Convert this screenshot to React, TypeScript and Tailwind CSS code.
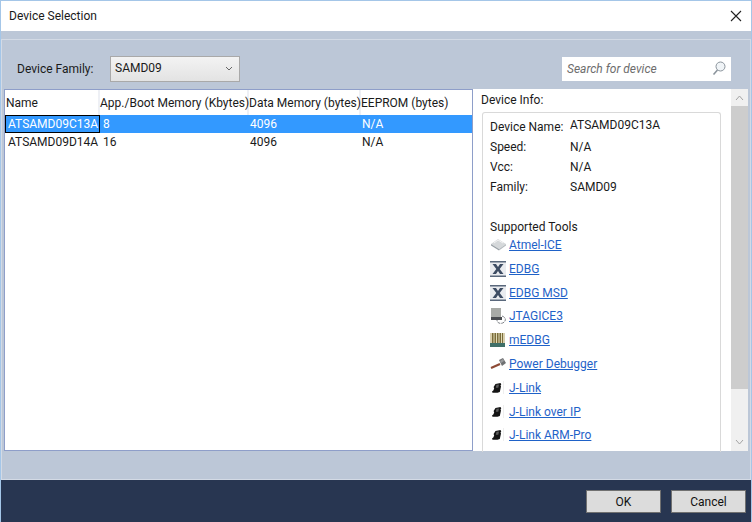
function Hdr({ w, pl, children }: { w: string; pl: string; children: string }) {
  return (
    <div className={`${w} ${pl} h-[25px] shrink-0 flex items-center border-r-2 border-[#eef0f5] whitespace-nowrap`}>
      {children}
    </div>
  );
}

function Row({ sel, name, app }: { sel?: boolean; name: string; app: string }) {
  return (
    <div className={`flex h-[18px] items-center ${sel ? "bg-[#3399ff] text-white" : "text-[#1a1a1a]"}`}>
      <div className={`w-[95px] h-full shrink-0 flex items-center whitespace-nowrap ${sel ? "border border-black pl-[2px]" : "pl-[3px]"}`}>{name}</div>
      <div className="w-[147px] shrink-0 pl-[3px]">{app}</div>
      <div className="w-[112px] shrink-0 pl-[3px]">4096</div>
      <div className="flex-1 pl-[3px]">N/A</div>
    </div>
  );
}

function Info({ k, v, h }: { k: string; v: string; h: string }) {
  return (
    <div className={`flex ${h}`}>
      <div className="w-[80px] shrink-0">{k}</div>
      <div>{v}</div>
    </div>
  );
}

function ChipIcon() {
  return (
    <svg width="16" height="16" viewBox="0 0 16 16">
      <path d="M5.500 4l5-1 .8 1.500-.8.8.5 1.200-1.200 5.500-2.300.8H2.500l-.5-1.300 1.300-.9.900-2.200-.6-1.400z" fill="#141414" />
      <path d="M6.500 4.800l2.500-.4-.7 3.400H5.800z" fill="#5c5c5c" />
      <path d="M13.500 1v13" stroke="#eeeeee" />
    </svg>
  );
}

function XIcon() {
  return (
    <svg width="16" height="16" viewBox="0 0 16 16">
      <rect x="0" y="0" width="16" height="16" fill="#e9ebef" />
      <rect x="0" y="0" width="16" height="1.500" fill="#5a687c" />
      <rect x="0" y="14.500" width="16" height="1.500" fill="#5a687c" />
      <path d="M2.500 3h3.500l2 3 2-3h3.500l-3.800 5 3.800 5H10l-2-3-2 3H2.500l3.800-5z" fill="#3d4c63" />
    </svg>
  );
}

function IceIcon() {
  return (
    <svg width="17" height="16" viewBox="0 0 17 16">
      <path d="M1 7l7-5 8 5-7 5z" fill="#d5d8da" />
      <path d="M1 7l8 5v1.500L1 8.500z" fill="#9aa1a6" />
      <path d="M9 12l7-5v1.500l-7 5z" fill="#b5babe" />
      <path d="M4 6l4-3 5 3" stroke="#f4f4f4" fill="none" />
    </svg>
  );
}

function JtagIcon() {
  return (
    <svg width="17" height="18" viewBox="0 0 17 18">
      <rect x="1" y="1" width="10" height="9" fill="#a8aaa6" />
      <rect x="1" y="10" width="11" height="3" fill="#4a4c50" />
      <path d="M12 9c3 1 4 3 3 5s-4 3-6 2-2-2-2-3" fill="none" stroke="#7d8187" strokeDasharray="3 1" />
    </svg>
  );
}

function MedbgIcon() {
  return (
    <svg width="15" height="16" viewBox="0 0 15 16">
      <rect x="0" y="1" width="15" height="14" fill="#d8cfae" />
      <rect x="2" y="1" width="11" height="10" fill="#7b6c3a" />
      <path d="M4 1v10M6.500 1v10M9 1v10M11.500 1v10" stroke="#e0dcb8" />
      <rect x="0" y="11" width="15" height="4" fill="#3f6f68" />
    </svg>
  );
}

function HammerIcon() {
  return (
    <svg width="17" height="16" viewBox="0 0 17 16">
      <path d="M1 12l9-4" stroke="#8d4a35" strokeWidth="2.200" />
      <path d="M9 4l4-2 3 5-4 3z" fill="#6f7173" />
      <path d="M10 5l3-2 1 2-3 2z" fill="#9a9c9e" />
    </svg>
  );
}

function Tool({ icon, label, h }: { icon: React.ReactNode; label: string; h: string }) {
  return (
    <div className={`flex items-center ${h}`}>
      <div className="w-[17px] h-[18px] shrink-0 flex items-center justify-start">{icon}</div>
      <a className="ml-[2px] [font-family:'Liberation_Sans',sans-serif] text-[12px] text-[#1f62c8] underline" href="#">
        {label}
      </a>
    </div>
  );
}

export default function App() {
  return (
    <div className="w-[752px] h-[522px] flex flex-col overflow-hidden bg-[#bcc7d7] border-x border-t border-[#a4c6e8] text-[12px] leading-[16px] text-[#1a1a1a] [font-family:Roboto,sans-serif]">
      <div className="h-[30px] shrink-0 bg-white flex items-center justify-between pl-[8px] pr-[9px]">
        <span>Device Selection</span>
        <svg width="12" height="12" viewBox="0 0 12 12">
          <path d="M1 1l10 10M11 1L1 11" stroke="#222" strokeWidth="1.100" />
        </svg>
      </div>
      <div className="flex-1 min-h-0 pt-[8px] flex flex-col">
        <div className="flex-1 min-h-0 border border-[#d3dae5] flex flex-col px-[2px] pb-[28px]">
          <div className="h-[49px] shrink-0 flex pl-[13px] pr-[17px] pt-[16px] justify-between">
            <div className="flex">
              <span className="mt-[5px] w-[93px]">Device Family:</span>
              <div className="w-[130px] h-[26px] border border-[#a9a9a9] bg-gradient-to-b from-[#f3f3f3] to-[#e3e3e3] flex items-center justify-between pl-[4px] pr-[6px] pb-[2px]">
                <span>SAMD09</span>
                <svg width="8" height="5" viewBox="0 0 8 5" className="mt-[1px]">
                  <path d="M1 1l3 3 3-3" fill="none" stroke="#666" />
                </svg>
              </div>
            </div>
            <div className="w-[169px] h-[24px] mt-[1px] bg-white flex items-center justify-between pl-[5px] pr-[5px] pb-[1px] italic text-[#6d6d6d]">
              <span>Search for device</span>
              <svg width="14" height="15" viewBox="0 0 14 15">
                <circle cx="8.500" cy="5.500" r="4.500" fill="#f0f4f7" stroke="#8b949c" />
                <path d="M5.500 9L1.500 13.500" stroke="#8b949c" strokeWidth="1.600" />
              </svg>
            </div>
          </div>
          <div className="flex-1 min-h-0 flex">
            <div className="w-[469px] shrink-0 bg-white border border-[#8e9ec9]">
              <div className="flex h-[25px]">
                <Hdr w="w-[95px]" pl="pl-[1px]">Name</Hdr>
                <Hdr w="w-[149px]" pl="pl-0">App./Boot Memory (Kbytes)</Hdr>
                <Hdr w="w-[112px]" pl="pl-0">Data Memory (bytes)</Hdr>
                <div className="flex-1 flex items-center">EEPROM (bytes)</div>
              </div>
              <Row sel name="ATSAMD09C13A" app="8" />
              <Row name="ATSAMD09D14A" app="16" />
            </div>
            <div className="flex-1 min-w-0 bg-white flex">
              <div className="flex-1 min-w-0 pl-[8px] pt-[3px]">
                <div className="h-[20px]">Device Info:</div>
                <div className="ml-[1px] w-[239px] h-[340px] border-x border-t border-[#d9d9d9] rounded-t-[3px] pl-[7px] pt-[5px]">
                  <div className="flex h-[21px]">
                    <div className="w-[80px] shrink-0 pt-[1px]">Device Name:</div>
                    <div className="-mt-[1px]">ATSAMD09C13A</div>
                  </div>
                  <Info k="Speed:" v="N/A" h="h-[20px]" />
                  <Info k="Vcc:" v="N/A" h="h-[20px]" />
                  <Info k="Family:" v="SAMD09" h="h-[40px]" />
                  <div className="h-[16px]">Supported Tools</div>
                  <Tool icon={<IceIcon />} label="Atmel-ICE" h="h-[20px]" />
                  <Tool icon={<XIcon />} label="EDBG" h="h-[24px] mt-[2px]" />
                  <Tool icon={<XIcon />} label="EDBG MSD" h="h-[24px]" />
                  <Tool icon={<JtagIcon />} label="JTAGICE3" h="h-[24px] -mt-[1px]" />
                  <Tool icon={<MedbgIcon />} label="mEDBG" h="h-[24px]" />
                  <Tool icon={<HammerIcon />} label="Power Debugger" h="h-[24px]" />
                  <Tool icon={<ChipIcon />} label="J-Link" h="h-[24px]" />
                  <Tool icon={<ChipIcon />} label="J-Link over IP" h="h-[24px]" />
                  <Tool icon={<ChipIcon />} label="J-Link ARM-Pro" h="h-[24px] -mt-[1px]" />
                </div>
              </div>
              <div className="w-[17px] shrink-0 bg-[#f0f0f0] flex flex-col">
                <div className="h-[17px] flex items-center justify-center">
                  <svg width="9" height="6" viewBox="0 0 9 6"><path d="M1 5l3.500-4 3.500 4" fill="none" stroke="#a3a3a3" /></svg>
                </div>
                <div className="h-[283px] bg-[#cdcdcd]" />
                <div className="flex-1 flex items-end justify-center pb-[6px]">
                  <svg width="9" height="6" viewBox="0 0 9 6"><path d="M1 1l3.500 4 3.500-4" fill="none" stroke="#a3a3a3" /></svg>
                </div>
              </div>
            </div>
          </div>
        </div>
        <div className="h-[42px] shrink-0 bg-[#283651] flex items-start justify-end gap-[10px] pt-[10px] pr-[5px]">
          <button className="w-[75px] h-[23px] bg-[#dcdcdc] border border-[#707070] text-[#111]">OK</button>
          <button className="w-[75px] h-[23px] bg-[#dcdcdc] border border-[#707070] text-[#111]">Cancel</button>
        </div>
      </div>
    </div>
  );
}
